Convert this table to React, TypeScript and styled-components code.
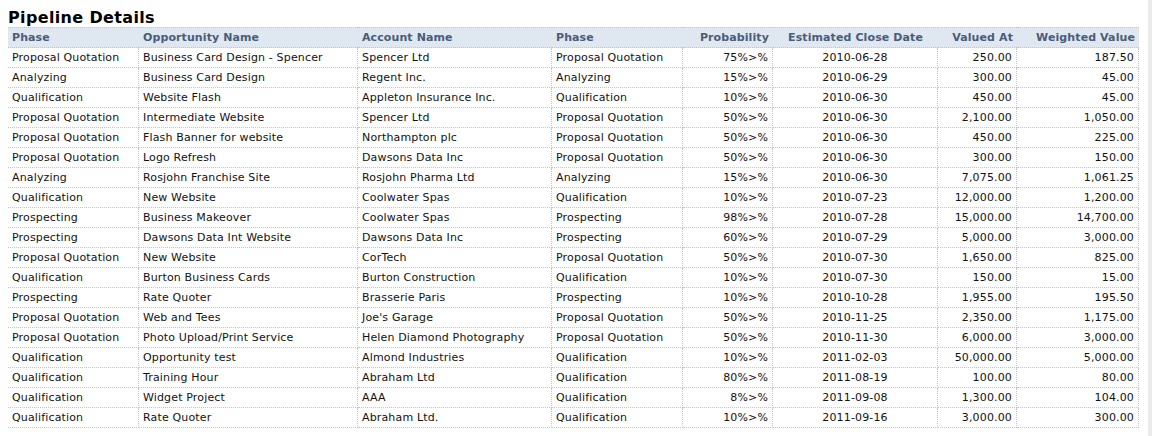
import React from 'react'
import styled, { createGlobalStyle } from 'styled-components'

type Align = 'left' | 'right' | 'center'

type Column = {
    key: string
    title: string
    width: number
    align: Align
}

const columns: Column[] = [
    { key: 'phase', title: 'Phase', width: 131, align: 'left' },
    { key: 'name', title: 'Opportunity Name', width: 219, align: 'left' },
    { key: 'account', title: 'Account Name', width: 194, align: 'left' },
    { key: 'phase2', title: 'Phase', width: 131, align: 'left' },
    { key: 'prob', title: 'Probability', width: 90, align: 'right' },
    { key: 'close', title: 'Estimated Close Date', width: 165, align: 'center' },
    { key: 'value', title: 'Valued At', width: 79, align: 'right' },
    { key: 'weighted', title: 'Weighted Value', width: 122, align: 'right' },
]

const rows: string[][] = [
    ['Proposal Quotation', 'Business Card Design - Spencer', 'Spencer Ltd', 'Proposal Quotation', '75%>%', '2010-06-28', '250.00', '187.50'],
    ['Analyzing', 'Business Card Design', 'Regent Inc.', 'Analyzing', '15%>%', '2010-06-29', '300.00', '45.00'],
    ['Qualification', 'Website Flash', 'Appleton Insurance Inc.', 'Qualification', '10%>%', '2010-06-30', '450.00', '45.00'],
    ['Proposal Quotation', 'Intermediate Website', 'Spencer Ltd', 'Proposal Quotation', '50%>%', '2010-06-30', '2,100.00', '1,050.00'],
    ['Proposal Quotation', 'Flash Banner for website', 'Northampton plc', 'Proposal Quotation', '50%>%', '2010-06-30', '450.00', '225.00'],
    ['Proposal Quotation', 'Logo Refresh', 'Dawsons Data Inc', 'Proposal Quotation', '50%>%', '2010-06-30', '300.00', '150.00'],
    ['Analyzing', 'Rosjohn Franchise Site', 'Rosjohn Pharma Ltd', 'Analyzing', '15%>%', '2010-06-30', '7,075.00', '1,061.25'],
    ['Qualification', 'New Website', 'Coolwater Spas', 'Qualification', '10%>%', '2010-07-23', '12,000.00', '1,200.00'],
    ['Prospecting', 'Business Makeover', 'Coolwater Spas', 'Prospecting', '98%>%', '2010-07-28', '15,000.00', '14,700.00'],
    ['Prospecting', 'Dawsons Data Int Website', 'Dawsons Data Inc', 'Prospecting', '60%>%', '2010-07-29', '5,000.00', '3,000.00'],
    ['Proposal Quotation', 'New Website', 'CorTech', 'Proposal Quotation', '50%>%', '2010-07-30', '1,650.00', '825.00'],
    ['Qualification', 'Burton Business Cards', 'Burton Construction', 'Qualification', '10%>%', '2010-07-30', '150.00', '15.00'],
    ['Prospecting', 'Rate Quoter', 'Brasserie Paris', 'Prospecting', '10%>%', '2010-10-28', '1,955.00', '195.50'],
    ['Proposal Quotation', 'Web and Tees', "Joe's Garage", 'Proposal Quotation', '50%>%', '2010-11-25', '2,350.00', '1,175.00'],
    ['Proposal Quotation', 'Photo Upload/Print Service', 'Helen Diamond Photography', 'Proposal Quotation', '50%>%', '2010-11-30', '6,000.00', '3,000.00'],
    ['Qualification', 'Opportunity test', 'Almond Industries', 'Qualification', '10%>%', '2011-02-03', '50,000.00', '5,000.00'],
    ['Qualification', 'Training Hour', 'Abraham Ltd', 'Qualification', '80%>%', '2011-08-19', '100.00', '80.00'],
    ['Qualification', 'Widget Project', 'AAA', 'Qualification', '8%>%', '2011-09-08', '1,300.00', '104.00'],
    ['Qualification', 'Rate Quoter', 'Abraham Ltd.', 'Qualification', '10%>%', '2011-09-16', '3,000.00', '300.00'],
]

const App: React.FunctionComponent = () => {
    return (
        <>
            <GlobalStyle />
            <Page>
                <Title>Pipeline Details</Title>
                <Table>
                    <colgroup>
                        {columns.map((c) => (
                            <col key={c.key} style={{ width: c.width }} />
                        ))}
                    </colgroup>
                    <thead>
                        <tr>
                            {columns.map((c) => (
                                <HeadCell key={c.key} $align={c.align}>
                                    {c.title}
                                </HeadCell>
                            ))}
                        </tr>
                    </thead>
                    <tbody>
                        {rows.map((row, i) => (
                            <tr key={i}>
                                {row.map((value, j) => (
                                    <Cell key={j} $align={columns[j].align}>
                                        {value}
                                    </Cell>
                                ))}
                            </tr>
                        ))}
                    </tbody>
                </Table>
            </Page>
        </>
    )
}

const GlobalStyle = createGlobalStyle`
    html, body {
        margin: 0;
        padding: 0;
        background: #ffffff;
    }
`

const Page = styled.div`
    box-sizing: border-box;
    width: 1152px;
    height: 436px;
    padding: 8px 0 0 8px;
    border-right: 4px solid #ebebeb;
    font-family: 'DejaVu Sans', Verdana, sans-serif;
    color: #111111;
`

const Title = styled.h2`
    margin: 0;
    padding-top: 1px;
    font-size: 16px;
    line-height: 18px;
    font-weight: bold;
    letter-spacing: 0.35px;
    color: #000000;
`

const Table = styled.table`
    width: 1131px;
    table-layout: fixed;
    border-collapse: separate;
    border-spacing: 0;
    font-size: 11px;
    letter-spacing: 0.15px;
`

const HeadCell = styled.th<{ $align: Align }>`
    box-sizing: border-box;
    height: 21px;
    padding: 1px 4px 0 4px;
    background: #dfe7f0;
    border-top: 1px dotted #c4c4c4;
    border-bottom: 1px dotted #c4c4c4;
    color: #4a5c7b;
    font-weight: bold;
    line-height: 18px;
    letter-spacing: 0.1px;
    text-align: ${(p) => p.$align};
    white-space: nowrap;
    overflow: hidden;
`

const Cell = styled.td<{ $align: Align }>`
    box-sizing: border-box;
    height: 20px;
    padding: 1px 4px 0 4px;
    border-bottom: 1px dotted #c4c4c4;
    border-right: 1px dotted #c4c4c4;
    line-height: 18px;
    text-align: ${(p) => p.$align};
    white-space: nowrap;
    overflow: hidden;
`

export default App
